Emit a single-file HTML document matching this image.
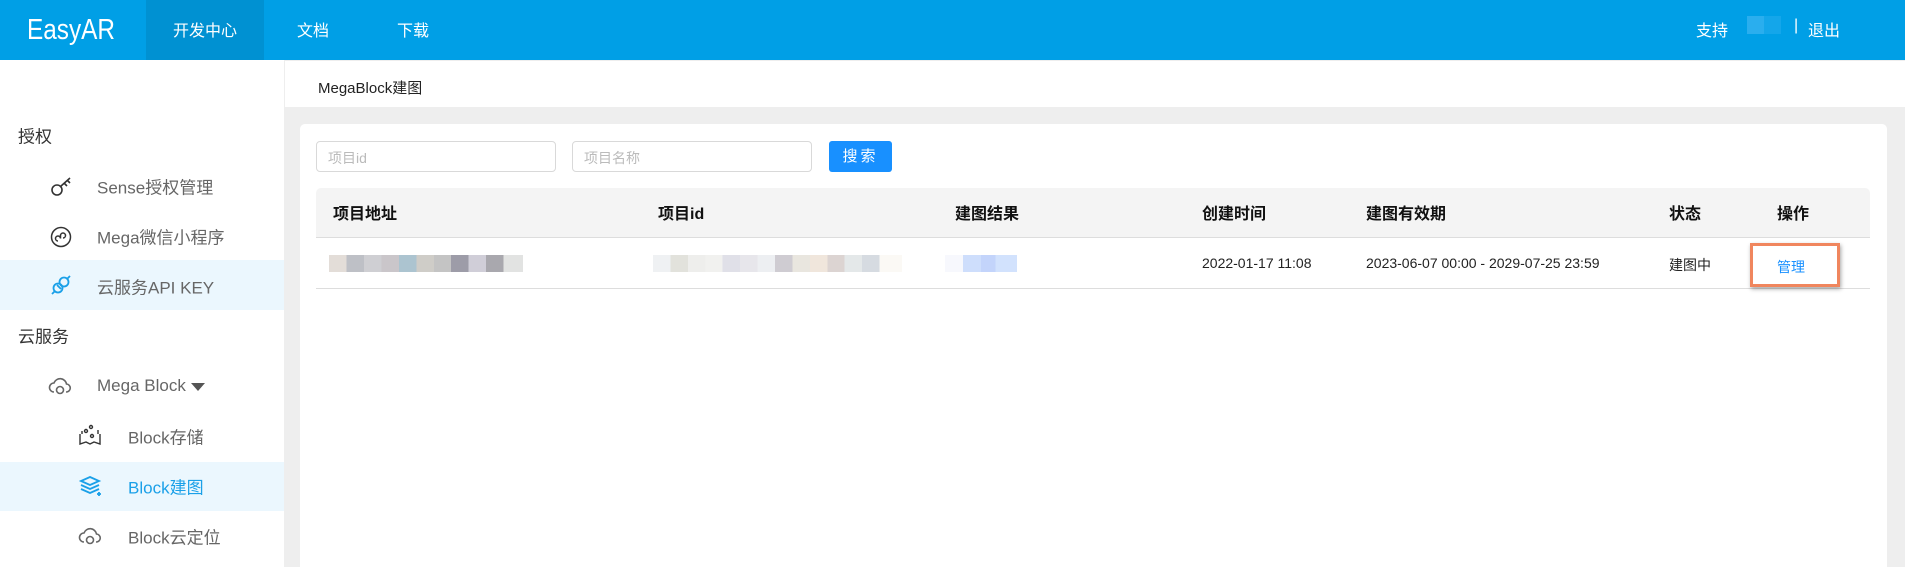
<!DOCTYPE html>
<html style="width:1905px;height:567px;overflow:hidden"><head><meta charset="utf-8"><style>
*{margin:0;padding:0;box-sizing:border-box}
body{width:1905px;height:567px;overflow:hidden;background:#eeeeee;font-family:"Liberation Sans","Noto Sans CJK SC",sans-serif;position:relative}
.a{position:absolute;white-space:nowrap}
.hdr{left:0;top:0;width:1905px;height:60px;background:#009fe6}
.nav{color:#fff;font-size:16px;top:17px}
.side{left:0;top:60px;width:284px;height:507px;background:#fff}
.si{font-size:17px;color:#666;transform:translateY(-50%)}
.st{font-size:17px;color:#333;transform:translateY(-50%)}
.th{font-size:16px;font-weight:bold;color:#111;top:200px}
.td{font-size:14px;color:#222;top:255px}
.b{position:absolute;height:17px;top:255px}
</style></head><body>
<div class="a hdr"></div>
<div class="a" style="left:146px;top:0;width:118px;height:60px;background:#0091d2"></div>
<div class="a" style="left:27px;top:14px;color:#fff;font-size:29px;transform:scaleX(0.84);transform-origin:0 0">EasyAR</div>
<div class="a nav" style="left:173px">开发中心</div>
<div class="a nav" style="left:297px">文档</div>
<div class="a nav" style="left:397px">下载</div>
<div class="a nav" style="left:1696px">支持</div>
<div class="a" style="left:1747px;top:16px;width:17px;height:18px;background:#2aaeee"></div>
<div class="a" style="left:1764px;top:16px;width:17px;height:18px;background:#14a6ea"></div>
<div class="a nav" style="left:1794px">|</div>
<div class="a nav" style="left:1808px">退出</div>

<div class="a side"></div>
<div class="a" style="left:0;top:260px;width:284px;height:50px;background:#ebf7fe"></div>
<div class="a" style="left:0;top:462px;width:284px;height:49px;background:#ebf7fe"></div>
<div class="a st" style="left:18px;top:135px">授权</div>
<svg class="a" style="left:50px;top:175px" width="24" height="22" viewBox="0 0 24 22" fill="none" stroke="#333" stroke-width="1.6"><circle cx="7" cy="15" r="5"/><path d="M10.5 11.5L20 3M14 8l3 3M17 5l3 3"/></svg>
<div class="a si" style="left:97px;top:186px">Sense授权管理</div>
<svg class="a" style="left:50px;top:226px" width="22" height="22" viewBox="0 0 22 22" fill="none" stroke="#333" stroke-width="1.5"><circle cx="11" cy="11" r="9.5"/><path d="M8 15a2.5 2.5 0 1 1 2.5-2.5V9.5A2.5 2.5 0 1 1 13 12"/></svg>
<div class="a si" style="left:97px;top:236px">Mega微信小程序</div>
<svg class="a" style="left:50px;top:274px" width="22" height="22" viewBox="0 0 22 22" fill="none" stroke="#1aa0e8" stroke-width="1.8"><circle cx="8" cy="14" r="4.5"/><circle cx="14" cy="8" r="4.5"/><path d="M2 20l3-3M17 5l3-3M7 11l4 4"/></svg>
<div class="a si" style="left:97px;top:286px">云服务API KEY</div>
<div class="a st" style="left:18px;top:335px">云服务</div>
<svg class="a" style="left:48px;top:376px" width="24" height="20" viewBox="0 0 24 20" fill="none" stroke="#666" stroke-width="1.6"><path d="M6 16a4.5 4.5 0 0 1 0-9 6.5 6.5 0 0 1 12.5 1A4 4 0 0 1 18 16"/><circle cx="12" cy="14" r="3.5"/></svg>
<div class="a si" style="left:97px;top:386px">Mega Block</div>
<div class="a" style="left:191px;top:383px;width:0;height:0;border-left:7px solid transparent;border-right:7px solid transparent;border-top:8px solid #555"></div>
<svg class="a" style="left:78px;top:424px" width="24" height="22" viewBox="0 0 24 22" fill="none" stroke="#333" stroke-width="1.4"><path d="M2 10v10l6-2 4 2 4-2 6 2V10"/><circle cx="8" cy="7" r="1.5"/><circle cx="13" cy="3" r="1.5"/><circle cx="14" cy="12" r="1.5"/><path d="M4 7v3M20 6v4"/></svg>
<div class="a si" style="left:128px;top:436px">Block存储</div>
<svg class="a" style="left:79px;top:475px" width="24" height="22" viewBox="0 0 24 22" fill="none" stroke="#1aa0e8" stroke-width="1.8"><path d="M11 2l9 4-9 4-9-4z"/><path d="M2 10l9 4 9-4M2 14l9 4 9-4"/><path d="M20 17v4M18 19h4"/></svg>
<div class="a si" style="left:128px;top:486px;color:#1aa0e8">Block建图</div>
<svg class="a" style="left:78px;top:526px" width="24" height="20" viewBox="0 0 24 20" fill="none" stroke="#666" stroke-width="1.6"><path d="M6 16a4.5 4.5 0 0 1 0-9 6.5 6.5 0 0 1 12.5 1A4 4 0 0 1 18 16"/><circle cx="12" cy="14" r="3.5"/></svg>
<div class="a si" style="left:128px;top:536px">Block云定位</div>

<div class="a" style="left:285px;top:61px;width:1620px;height:46px;background:#fff"></div>
<div class="a" style="left:318px;top:77px;font-size:15px;color:#222">MegaBlock建图</div>

<div class="a" style="left:300px;top:124px;width:1587px;height:443px;background:#fff;border-radius:5px 5px 0 0"></div>
<div class="a" style="left:316px;top:141px;width:240px;height:31px;border:1px solid #d9d9d9;border-radius:4px;background:#fff"></div>
<div class="a" style="left:328px;top:148px;font-size:14px;color:#bbb">项目id</div>
<div class="a" style="left:572px;top:141px;width:240px;height:31px;border:1px solid #d9d9d9;border-radius:4px;background:#fff"></div>
<div class="a" style="left:584px;top:148px;font-size:14px;color:#bbb">项目名称</div>
<div class="a" style="left:829px;top:141px;width:63px;height:31px;background:#1890ff;border-radius:3px;color:#fff;font-size:15px;text-align:center;line-height:31px;letter-spacing:3px">搜索</div>

<div class="a" style="left:316px;top:188px;width:1554px;height:50px;background:#f4f4f4;border-bottom:1px solid #ddd;border-radius:5px 5px 0 0"></div>
<div class="a" style="left:316px;top:288px;width:1554px;height:1px;background:#ddd"></div>
<div class="a th" style="left:333px">项目地址</div>
<div class="a th" style="left:658px">项目id</div>
<div class="a th" style="left:955px">建图结果</div>
<div class="a th" style="left:1202px">创建时间</div>
<div class="a th" style="left:1366px">建图有效期</div>
<div class="a th" style="left:1669px">状态</div>
<div class="a th" style="left:1777px">操作</div>

<div class="b" style="left:329px;width:194px;background:linear-gradient(90deg,#e3ddd8 0 9%,#bec0c6 9% 18%,#cfcfd3 18% 27%,#cac6ca 27% 36%,#acc4d0 36% 45%,#cfcdc8 45% 54%,#c4c4c4 54% 63%,#9d9ca8 63% 72%,#d0ced8 72% 81%,#a9a8ae 81% 90%,#e2e3e2 90%)"></div>
<div class="b" style="left:653px;width:249px;background:linear-gradient(90deg,#eff1f3 0 7%,#e2e2dc 7% 14%,#eeeeec 14% 21%,#f1f1ef 21% 28%,#e0e0e8 28% 35%,#e7e6eb 35% 42%,#edeff2 42% 49%,#cfccd2 49% 56%,#e9e6df 56% 63%,#f0e6dc 63% 70%,#dcd4d2 70% 77%,#e4e8e9 77% 84%,#d6dbe1 84% 91%,#fbf9f5 91%)"></div>
<div class="b" style="left:945px;width:72px;background:linear-gradient(90deg,#f7f8fd 0 25%,#cedefc 25% 50%,#c3d4fb 50% 70%,#d2e2fd 70%)"></div>
<div class="a td" style="left:1202px">2022-01-17 11:08</div>
<div class="a td" style="left:1366px">2023-06-07 00:00 - 2029-07-25 23:59</div>
<div class="a td" style="left:1669px">建图中</div>
<div class="a" style="left:1750px;top:243px;width:90px;height:44px;border:3px solid #f0865e;box-shadow:1px 2px 4px rgba(0,0,0,.35);background:#fff"></div>
<div class="a td" style="left:1777px;top:257px;color:#1890ff">管理</div>
</body></html>
